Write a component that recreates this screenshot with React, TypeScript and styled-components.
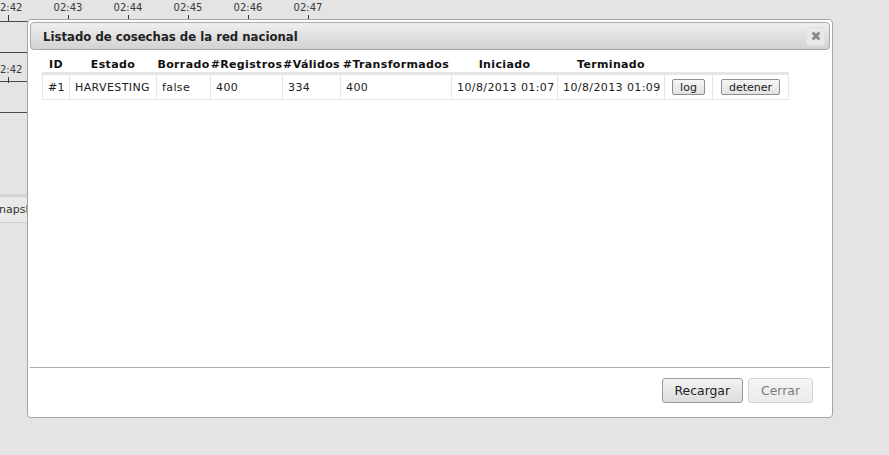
import React from 'react';
import styled, {createGlobalStyle} from 'styled-components';

const GlobalStyle = createGlobalStyle`
  html, body {
    margin: 0;
    padding: 0;
    background: #e4e4e4;
  }
  body {
    font-family: 'DejaVu Sans', Verdana, sans-serif;
    color: #222;
  }
`;

const Screen = styled.div`
  position: relative;
  width: 889px;
  height: 455px;
  overflow: hidden;
`;

// background timeline board, mostly hidden behind the dialog
const Board = styled.div`
  width: 700px;
  display: flex;
  flex-direction: column;
`;

const Ruler = styled.div<{$top: number}>`
  display: flex;
  margin-left: -22px;
  padding-top: ${p => p.$top}px;
`;

const Mark = styled.div`
  flex: none;
  width: 60px;
  display: flex;
  flex-direction: column;
  align-items: center;
  font-size: 10px;
  line-height: 11px;
  color: #3a3a3a;
  &::after {
    content: '';
    width: 1px;
    height: 6px;
    margin-top: 2px;
    background: #333;
  }
`;

const Lane = styled.div<{$height: number}>`
  box-sizing: border-box;
  height: ${p => p.$height}px;
  border-top: 1px solid #4a4a4a;
`;

const Toolbar = styled.div`
  border-top: 3px solid #d5d5d5;
  padding-top: 1px;
`;

const ToolButton = styled.div`
  box-sizing: border-box;
  height: 25px;
  margin-left: -14px;
  padding: 5px 6px 0;
  font-size: 11px;
  color: #333;
  background: #e9e9e9;
  border-bottom: 1px solid #cdcdcd;
`;

const Dialog = styled.div`
  position: absolute;
  left: 27px;
  top: 19px;
  box-sizing: border-box;
  width: 806px;
  height: 399px;
  padding: 2px;
  background: #fff;
  border: 1px solid #a6a6a6;
  border-radius: 4px;
  display: flex;
  flex-direction: column;
`;

const TitleBar = styled.div`
  box-sizing: border-box;
  height: 28px;
  flex: none;
  display: flex;
  align-items: center;
  justify-content: space-between;
  padding: 0 4px 0 12px;
  border: 1px solid #aaaaaa;
  border-radius: 4px;
  background: linear-gradient(#efefef, #d2d2d2);
`;

const Title = styled.span`
  font-family: 'DejaVu Sans Condensed', 'DejaVu Sans', sans-serif;
  font-weight: bold;
  font-size: 13px;
  color: #222;
`;

const CloseButton = styled.button`
  box-sizing: border-box;
  width: 19px;
  height: 19px;
  padding: 0;
  display: flex;
  align-items: center;
  justify-content: center;
  border: 1px solid #e2e2e2;
  border-radius: 3px;
  background: #e8e8e8;
`;

const Content = styled.div`
  flex: 1;
  padding: 7px 12px 0;
`;

const Table = styled.table`
  width: 746px;
  table-layout: fixed;
  border-collapse: collapse;
  font-size: 11px;
  letter-spacing: 0.4px;
  color: #222;
`;

const Head = styled.th<{$width: number}>`
  width: ${p => p.$width}px;
  padding: 0 0 1px;
  height: 14px;
  font-weight: bold;
  letter-spacing: 0.35px;
  text-align: center;
  white-space: nowrap;
  overflow: visible;
  color: #111;
  border-bottom: 3px solid #e2e6e6;
`;

const Cell = styled.td<{$center?: boolean}>`
  box-sizing: border-box;
  height: 26px;
  padding: 0 5px;
  text-align: ${p => (p.$center ? 'center' : 'left')};
  white-space: nowrap;
  border: 1px solid #e6e6e6;
  border-top: none;
`;

const RowButton = styled.button`
  box-sizing: border-box;
  height: 16px;
  padding: 0 7px;
  font-family: 'DejaVu Sans', Verdana, sans-serif;
  font-size: 11px;
  line-height: 13px;
  color: #222;
  border: 1px solid #8e8e8e;
  border-radius: 2px;
  background: linear-gradient(#f6f6f6, #e2e2e2);
`;

const Footer = styled.div`
  box-sizing: border-box;
  height: 48px;
  flex: none;
  display: flex;
  justify-content: flex-end;
  align-items: flex-start;
  gap: 5px;
  padding: 10px 17px 0 0;
  border-top: 1px solid #aaaaaa;
`;

const FooterButton = styled.button<{$disabled?: boolean}>`
  box-sizing: border-box;
  height: 25px;
  padding: 0 12px;
  font-family: 'DejaVu Sans', Verdana, sans-serif;
  font-size: 12.4px;
  color: ${p => (p.$disabled ? '#7a7a7a' : '#222')};
  border: 1px solid ${p => (p.$disabled ? '#d4d4d4' : '#9a9a9a')};
  border-radius: 3px;
  background: ${p =>
    p.$disabled ? 'linear-gradient(#f5f5f5, #ebebeb)' : 'linear-gradient(#f3f3f3, #dcdcdc)'};
`;

const times = ['02:42', '02:43', '02:44', '02:45', '02:46', '02:47'];

const columns = [
  {title: 'ID', width: 27},
  {title: 'Estado', width: 87},
  {title: 'Borrado', width: 54},
  {title: '#Registros', width: 72},
  {title: '#Válidos', width: 58},
  {title: '#Transformados', width: 111},
  {title: 'Iniciado', width: 106},
  {title: 'Terminado', width: 107},
  {title: '', width: 48},
  {title: '', width: 76},
];

const harvests = [
  {
    id: '#1',
    state: 'HARVESTING',
    deleted: 'false',
    records: 400,
    valid: 334,
    transformed: 400,
    started: '10/8/2013 01:07',
    finished: '10/8/2013 01:09',
  },
];

export default function App() {
  return (
    <Screen>
      <GlobalStyle />
      <Board>
        <Ruler $top={2}>
          {times.map(t => (
            <Mark key={t}>{t}</Mark>
          ))}
        </Ruler>
        <Lane $height={31} />
        <Lane $height={29}>
          <Ruler $top={11}>
            <Mark>02:42</Mark>
          </Ruler>
        </Lane>
        <Lane $height={31} />
        <Lane $height={82} />
        <Toolbar>
          <ToolButton>Snapshot</ToolButton>
        </Toolbar>
      </Board>

      <Dialog>
        <TitleBar>
          <Title>Listado de cosechas de la red nacional</Title>
          <CloseButton>
            <svg width="10" height="10" viewBox="0 0 10 10">
              <path d="M1.6 1.6L8.4 8.4M8.4 1.6L1.6 8.4" stroke="#878787" strokeWidth="2.8" />
            </svg>
          </CloseButton>
        </TitleBar>
        <Content>
          <Table>
            <thead>
              <tr>
                {columns.map((c, i) => (
                  <Head key={i} $width={c.width}>
                    {c.title}
                  </Head>
                ))}
              </tr>
            </thead>
            <tbody>
              {harvests.map(h => (
                <tr key={h.id}>
                  <Cell>{h.id}</Cell>
                  <Cell>{h.state}</Cell>
                  <Cell>{h.deleted}</Cell>
                  <Cell>{h.records}</Cell>
                  <Cell>{h.valid}</Cell>
                  <Cell>{h.transformed}</Cell>
                  <Cell>{h.started}</Cell>
                  <Cell>{h.finished}</Cell>
                  <Cell $center>
                    <RowButton>log</RowButton>
                  </Cell>
                  <Cell $center>
                    <RowButton>detener</RowButton>
                  </Cell>
                </tr>
              ))}
            </tbody>
          </Table>
        </Content>
        <Footer>
          <FooterButton>Recargar</FooterButton>
          <FooterButton $disabled>Cerrar</FooterButton>
        </Footer>
      </Dialog>
    </Screen>
  );
}
